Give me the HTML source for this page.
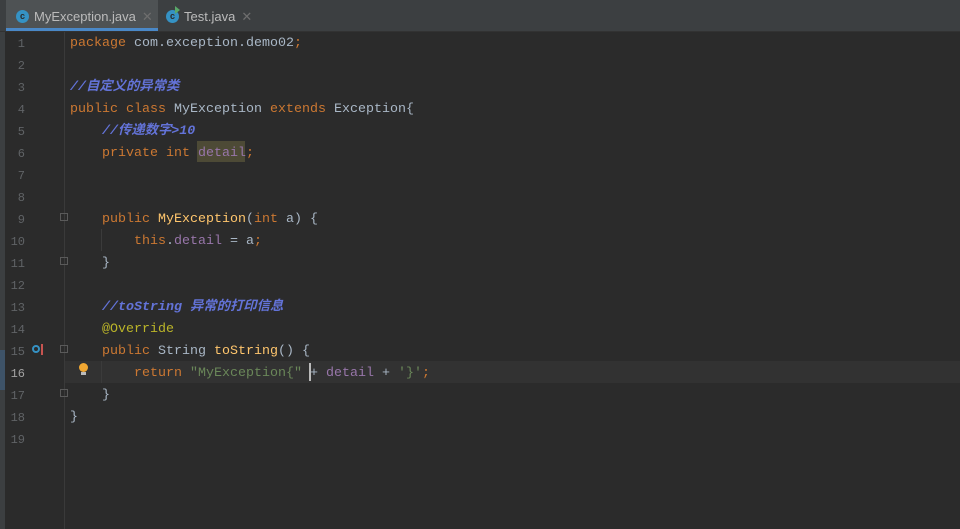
<!DOCTYPE html>
<html><head><meta charset="utf-8"><style>
body{margin:0;width:960px;height:529px;background:#2b2b2b;overflow:hidden;position:relative;font-family:"Liberation Mono","Noto Sans CJK SC",monospace;}
#tabs{position:absolute;left:0;top:0;width:960px;height:31px;background:#3c3f41;border-bottom:1px solid #323232;}
.tab{position:absolute;top:0;height:31px;font:13px "Liberation Sans",sans-serif;color:#bbbbbb;line-height:34px;}
.ic{position:absolute;top:10px;width:13px;height:13px;border-radius:50%;background:#3592c4;color:#2b2b2b;font:bold 9px "Liberation Sans";text-align:center;line-height:13px;}
.x{color:#6e6e6e;font-size:13px;margin-left:6px}
#strip{position:absolute;left:0;top:32px;width:5px;height:497px;background:#3c3f41;}
#gl{position:absolute;left:64px;top:32px;width:1px;height:497px;background:#3a3a3a;}
.ln{position:absolute;left:0;width:25px;text-align:right;color:#606366;font-size:12px;line-height:22px;margin-top:2px}
.c{position:absolute;left:70px;font-size:13.33px;line-height:22px;color:#a9b7c6;white-space:pre;margin-top:2px}
.k{color:#cc7832}.m{color:#ffc66d}.f{color:#9876aa}.s{color:#6a8759}.a{color:#bbb529}
.cm{color:#6373d8;font-style:italic;font-weight:bold}
.fold{position:absolute;left:60px;width:8px;height:8px;border:1px solid #5a5a5a;box-sizing:border-box;}
</style></head><body>
<div id="tabs">
<div class="tab" style="left:6px;width:152px;background:#4e5254;"><span class="ic" style="left:10px">c</span><span style="position:absolute;left:28px">MyException.java<span class="x">✕</span></span><div style="position:absolute;left:0;bottom:0;width:152px;height:3px;background:#4a88c7"></div></div>
<div class="tab" style="left:158px;width:100px;"><span class="ic" style="left:8px">c</span><span style="position:absolute;left:26px">Test.java<span class="x">✕</span></span><span style="position:absolute;left:17px;top:6px;width:0;height:0;border-left:5px solid #59a869;border-top:4px solid transparent;border-bottom:4px solid transparent"></span></div>
</div>
<div id="strip"><div style="position:absolute;left:0;top:318px;width:5px;height:40px;background:#3e5368"></div></div>
<div style="position:absolute;left:65px;top:361px;width:895px;height:22px;background:#323232"></div>
<div id="gl"></div>
<div style="position:absolute;left:101px;top:229px;width:1px;height:22px;background:#3b3b3b"></div>
<div style="position:absolute;left:101px;top:361px;width:1px;height:22px;background:#3b3b3b"></div>
<div style="position:absolute;left:197px;top:141px;width:48px;height:21px;background:#4d4a36"></div>
<div class="fold" style="top:213px"></div><div class="fold" style="top:257px"></div><div class="fold" style="top:345px"></div><div class="fold" style="top:389px"></div>
<div style="position:absolute;left:32px;top:345px;width:8px;height:8px;border-radius:50%;border:2px solid #3592c4;box-sizing:border-box"></div>
<div style="position:absolute;left:41px;top:344px;width:2px;height:11px;background:#c75450"></div>
<div style="position:absolute;left:79px;top:363px;width:9px;height:9px;border-radius:50%;background:#f0a732"></div>
<div style="position:absolute;left:81px;top:372px;width:5px;height:3px;background:#bbb"></div>
<div style="position:absolute;left:309px;top:363px;width:2px;height:18px;background:#bbbbbb"></div>
<div class="ln" style="top:31px">1</div><div class="ln" style="top:53px">2</div><div class="ln" style="top:75px">3</div><div class="ln" style="top:97px">4</div><div class="ln" style="top:119px">5</div><div class="ln" style="top:141px">6</div><div class="ln" style="top:163px">7</div><div class="ln" style="top:185px">8</div><div class="ln" style="top:207px">9</div><div class="ln" style="top:229px">10</div><div class="ln" style="top:251px">11</div><div class="ln" style="top:273px">12</div><div class="ln" style="top:295px">13</div><div class="ln" style="top:317px">14</div><div class="ln" style="top:339px">15</div><div class="ln" style="top:361px;color:#a4a3a3">16</div><div class="ln" style="top:383px">17</div><div class="ln" style="top:405px">18</div><div class="ln" style="top:427px">19</div>
<div class="c" style="top:31px"><span class="k">package</span> com.exception.demo02<span class="k">;</span></div>
<div class="c" style="top:75px"><span class="cm">//自定义的异常类</span></div>
<div class="c" style="top:97px"><span class="k">public class</span> MyException <span class="k">extends</span> Exception{</div>
<div class="c" style="top:119px">    <span class="cm">//传递数字&gt;10</span></div>
<div class="c" style="top:141px">    <span class="k">private int</span> <span class="f">detail</span><span class="k">;</span></div>
<div class="c" style="top:207px">    <span class="k">public</span> <span class="m">MyException</span>(<span class="k">int</span> a) {</div>
<div class="c" style="top:229px">        <span class="k">this</span>.<span class="f">detail</span> = a<span class="k">;</span></div>
<div class="c" style="top:251px">    }</div>
<div class="c" style="top:295px">    <span class="cm">//toString 异常的打印信息</span></div>
<div class="c" style="top:317px">    <span class="a">@Override</span></div>
<div class="c" style="top:339px">    <span class="k">public</span> String <span class="m">toString</span>() {</div>
<div class="c" style="top:361px">        <span class="k">return</span> <span class="s">"MyException{"</span> + <span class="f">detail</span> + <span class="s">'}'</span><span class="k">;</span></div>
<div class="c" style="top:383px">    }</div>
<div class="c" style="top:405px">}</div>
</body></html>
